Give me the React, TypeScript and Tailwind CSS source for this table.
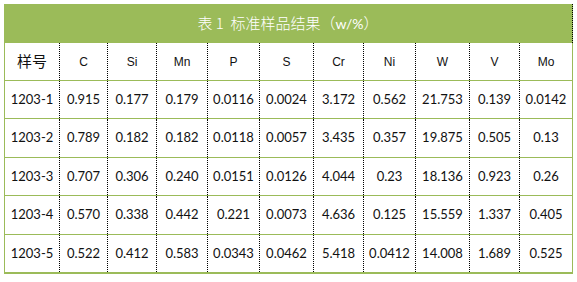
import React from 'react';

const cols = ['w-[54px]', 'w-[48px]', 'w-[49px]', 'w-[51px]', 'w-[52px]', 'w-[54px]', 'w-[50px]', 'w-[52px]', 'w-[54px]', 'w-[50px]', 'w-[53px]'];
const heads = ['样号', 'C', 'Si', 'Mn', 'P', 'S', 'Cr', 'Ni', 'W', 'V', 'Mo'];
const rows = [
  ['1203-1', '0.915', '0.177', '0.179', '0.0116', '0.0024', '3.172', '0.562', '21.753', '0.139', '0.0142'],
  ['1203-2', '0.789', '0.182', '0.182', '0.0118', '0.0057', '3.435', '0.357', '19.875', '0.505', '0.13'],
  ['1203-3', '0.707', '0.306', '0.240', '0.0151', '0.0126', '4.044', '0.23', '18.136', '0.923', '0.26'],
  ['1203-4', '0.570', '0.338', '0.442', '0.221', '0.0073', '4.636', '0.125', '15.559', '1.337', '0.405'],
  ['1203-5', '0.522', '0.412', '0.583', '0.0343', '0.0462', '5.418', '0.0412', '14.008', '1.689', '0.525'],
];
const rowH = ['h-[38px]', 'h-[39px]', 'h-[38px]', 'h-[39px]', 'h-[37px]'];

export default function App() {
  return (
    <div className="w-[577px] h-[282px] bg-white pl-1 pt-1">
      <div className="w-[569px]">
        {/* 标题 */}
        <div className="h-[39px] bg-[#9bbb59] flex items-center justify-center border-r border-dotted border-black text-white text-[15px] font-light font-['Noto_Sans_CJK_SC',sans-serif]">
          <span>表&nbsp;1&nbsp;&nbsp;标准样品结果（<span className="font-['Lato',sans-serif] font-normal text-[14px]">w/%</span>）</span>
        </div>
        <div className="border-l border-r border-b-2 border-[#9bbb59]">
          {/* 表头 */}
          <div className="flex h-[38px] border-b border-[#9bbb59]">
            {heads.map((h, i) => (
              <div
                key={h}
                className={`${cols[i]} flex items-center justify-center text-[#111] ${i > 0 ? 'border-l border-dotted border-black' : ''} ${
                  i === 0 ? "text-[15px] font-['Noto_Sans_CJK_SC',sans-serif]" : "text-[12px] font-['Liberation_Sans',sans-serif]"
                }`}
              >
                {h}
              </div>
            ))}
          </div>
          {rows.map((r, ri) => (
            <div key={r[0]} className={`flex ${rowH[ri]} ${ri < rows.length - 1 ? 'border-b border-[#9bbb59]' : ''}`}>
              {r.map((v, i) => (
                <div
                  key={i}
                  className={`${cols[i]} flex items-center justify-center text-[13px] text-[#111] font-['Lato',sans-serif] ${
                    i > 0 ? 'border-l border-dotted border-black' : ''
                  }`}
                >
                  {v}
                </div>
              ))}
            </div>
          ))}
        </div>
      </div>
    </div>
  );
}
